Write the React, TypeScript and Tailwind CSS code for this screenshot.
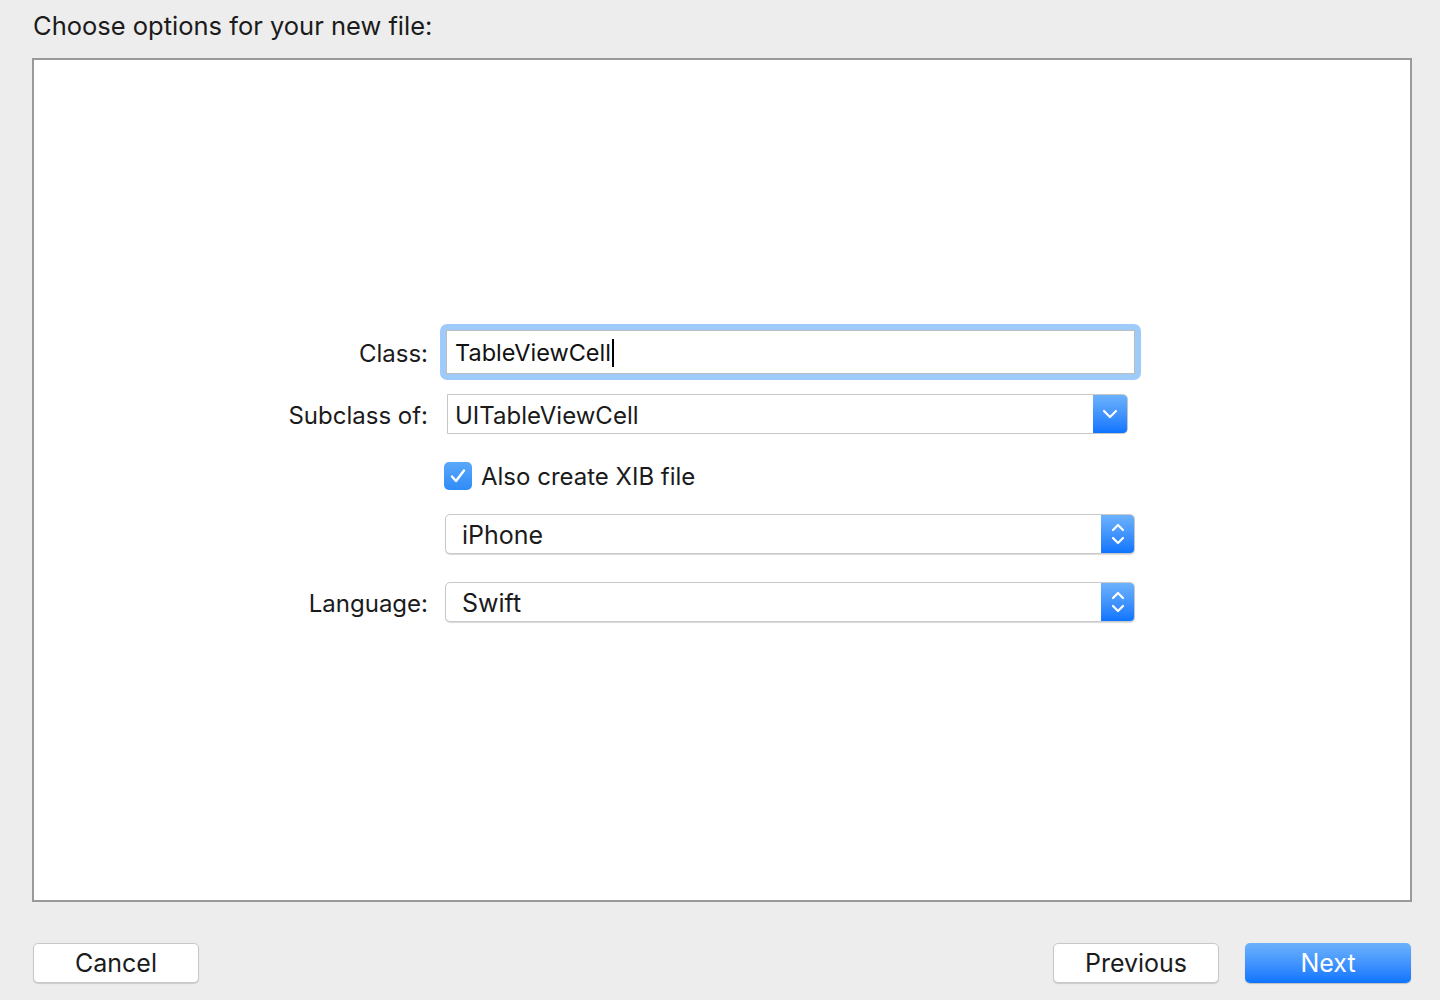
import React from 'react';

const font = "font-['Inter','Liberation_Sans',sans-serif]";

const ChevronDown = () => (
  <svg width="16" height="10" viewBox="0 0 16 10" fill="none">
    <path d="M2 2 L8 8 L14 2" stroke="white" strokeWidth="2.2" strokeLinecap="round" strokeLinejoin="round" />
  </svg>
);

const UpDown = () => (
  <svg width="14" height="26" viewBox="0 0 14 26" fill="none">
    <path d="M2 9 L7 4 L12 9" stroke="white" strokeWidth="2.2" strokeLinecap="round" strokeLinejoin="round" />
    <path d="M2 17 L7 22 L12 17" stroke="white" strokeWidth="2.2" strokeLinecap="round" strokeLinejoin="round" />
  </svg>
);

const Label: React.FC<{ text: string }> = ({ text }) => (
  <div className="w-[394px] shrink-0 pt-[3px] text-right text-[24px] text-[#1b1b1b]">{text}</div>
);

const PopUp: React.FC<{ value: string }> = ({ value }) => (
  <div className="flex h-[40px] w-[690px] overflow-hidden rounded-[5px] border border-[#c9c9c9] bg-white shadow-[0_1px_1px_rgba(0,0,0,0.15)]">
    <div className="flex flex-1 items-center pl-4 pt-[3px] text-[25px] text-[#1b1b1b]">{value}</div>
    <div className="flex w-[33px] items-center justify-center bg-gradient-to-b from-[#6cb2fb] to-[#0a74ff]">
      <UpDown />
    </div>
  </div>
);

const Button: React.FC<{ children: React.ReactNode; primary?: boolean }> = ({ children, primary }) => (
  <div
    className={
      primary
        ? 'flex h-[40px] w-[166px] items-center justify-center rounded-[5px] bg-gradient-to-b from-[#6cb2fb] to-[#0a74ff] pt-[1px] text-[25px] text-white shadow-[0_1px_1px_rgba(0,0,0,0.2)]'
        : 'flex h-[40px] w-[166px] items-center justify-center rounded-[5px] border border-[#c8c8c8] bg-white pt-[1px] text-[25px] text-[#1b1b1b] shadow-[0_1px_1px_rgba(0,0,0,0.15)]'
    }
  >
    {children}
  </div>
);

export default function App() {
  return (
    <div className={`flex h-[1000px] w-[1440px] flex-col bg-[#ededed] ${font}`}>
      <div className="h-[58px] pl-[33px] pt-[11px] text-[25.5px] leading-[30px] text-[#1b1b1b]">
        Choose options for your new file:
      </div>

      <div className="ml-[32px] mr-[28px] h-[844px] border-2 border-[#9a9a9a] bg-white pt-[264px]">
        {/* Class */}
        <div className="flex h-[56px] items-center">
          <Label text="Class:" />
          <div className="ml-[12px] h-[56px] w-[701px] rounded-[7px] bg-[#9fcbfa] p-[6px]">
            <div className="flex h-full items-center border border-[#bcbcbc] bg-white pl-[8px] pt-[2px] text-[23.5px] text-[#111]">
              TableViewCell
              <span className="ml-[1px] inline-block h-[28px] w-[2px] bg-black" />
            </div>
          </div>
        </div>

        {/* Subclass */}
        <div className="mt-[14px] flex h-[40px] items-center">
          <Label text="Subclass of:" />
          <div className="ml-[19px] flex h-[40px] w-[681px] overflow-hidden rounded-r-[5px] border border-[#c6c6c6] bg-white">
            <div className="flex flex-1 items-center pl-[7px] pt-[3px] text-[24px] text-[#1b1b1b]">UITableViewCell</div>
            <div className="flex w-[34px] items-center justify-center bg-gradient-to-b from-[#6cb2fb] to-[#0a74ff]">
              <ChevronDown />
            </div>
          </div>
        </div>

        {/* Checkbox */}
        <div className="mt-[28px] flex h-[28px] items-center">
          <div className="ml-[410px] flex h-[28px] w-[28px] items-center justify-center rounded-[5px] bg-gradient-to-b from-[#5aa8f9] to-[#2f8cf7]">
            <svg width="18" height="16" viewBox="0 0 18 16" fill="none">
              <path d="M3 8.5 L7 13 L15 2.5" stroke="white" strokeWidth="2.4" strokeLinecap="round" strokeLinejoin="round" />
            </svg>
          </div>
          <span className="ml-[9px] pt-[1px] text-[24px] text-[#1b1b1b]">Also create XIB file</span>
        </div>

        {/* Device */}
        <div className="mt-[24px] flex h-[40px] items-center">
          <div className="ml-[411px]">
            <PopUp value="iPhone" />
          </div>
        </div>

        {/* Language */}
        <div className="mt-[28px] flex h-[40px] items-center">
          <Label text="Language:" />
          <div className="ml-[17px]">
            <PopUp value="Swift" />
          </div>
        </div>
      </div>

      <div className="flex items-center pl-[33px] pr-[29px] pt-[41px]">
        <Button>Cancel</Button>
        <div className="flex-1" />
        <Button>Previous</Button>
        <div className="ml-[26px]">
          <Button primary>Next</Button>
        </div>
      </div>
    </div>
  );
}
